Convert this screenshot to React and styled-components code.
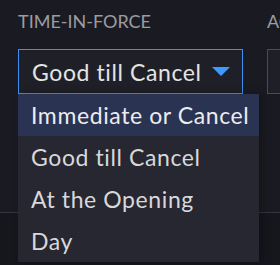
import React from "react";
import styled, { createGlobalStyle } from "styled-components";

const Global = createGlobalStyle`
  html, body { margin: 0; padding: 0; background: #15161c; }
  body { font-family: "Lato", "Open Sans", sans-serif; }
`;

const Page = styled.div`
  width: 280px;
  height: 265px;
  overflow: hidden;
  display: flex;
  flex-direction: column;
`;

const TopSection = styled.div`
  height: 213px;
  background: #1a1b22;
  border-bottom: 1px solid #34353c;
  box-sizing: border-box;
  display: flex;
  gap: 24px;
  padding: 10px 0 0 18px;
`;

const Bottom = styled.div`
  flex: 1;
  background: #16171d;
`;

const Field = styled.div`
  display: flex;
  flex-direction: column;
  width: ${(p) => p.$w}px;
  flex-shrink: 0;
`;

const Label = styled.div`
  font-size: 18px;
  line-height: 22px;
  color: #9b9ca3;
  text-transform: uppercase;
  white-space: nowrap;
  margin-bottom: 17px;
`;

const SelectWrap = styled.div`
  position: relative;
`;

const SelectBox = styled.div`
  box-sizing: border-box;
  height: 45px;
  border: 1px solid ${(p) => (p.$active ? "#3b8ff0" : "#4b4c52")};
  background: #1f2027;
  display: flex;
  align-items: center;
  justify-content: space-between;
  padding: 0 12px 0 13px;
  color: #e4e4e6;
  font-size: 23px;
  letter-spacing: 0.6px;
`;

const Arrow = styled.svg`
  width: 18px;
  height: 9px;
  display: block;
`;

const Menu = styled.div`
  position: absolute;
  top: 100%;
  left: 0;
  width: 241px;
  background: #262731;
  box-shadow: 4px 0 8px rgba(0, 0, 0, 0.25);
  display: flex;
  flex-direction: column;
  z-index: 5;
`;

const Item = styled.div`
  height: 42px;
  display: flex;
  align-items: center;
  padding-left: 13px;
  font-size: 23px;
  letter-spacing: 0.6px;
  color: ${(p) => (p.$hl ? "#ececef" : "#d8d8db")};
  background: ${(p) => (p.$hl ? "#2a3352" : "transparent")};
  white-space: nowrap;
`;

const options = ["Immediate or Cancel", "Good till Cancel", "At the Opening", "Day"];

export default function App() {
  return (
    <Page>
      <Global />
      <TopSection>
        <Field $w={225}>
          <Label>Time-in-force</Label>
          <SelectWrap>
            <SelectBox $active>
              <span>Good till Cancel</span>
              <Arrow viewBox="0 0 18 9">
                <path d="M0 0 H18 L9 9 Z" fill="#3d9bff" />
              </Arrow>
            </SelectBox>
            <Menu>
              {options.map((o, i) => (
                <Item key={o} $hl={i === 0}>
                  {o}
                </Item>
              ))}
            </Menu>
          </SelectWrap>
        </Field>
        <Field $w={120}>
          <Label>Action</Label>
          <SelectWrap>
            <SelectBox />
          </SelectWrap>
        </Field>
      </TopSection>
      <Bottom />
    </Page>
  );
}
